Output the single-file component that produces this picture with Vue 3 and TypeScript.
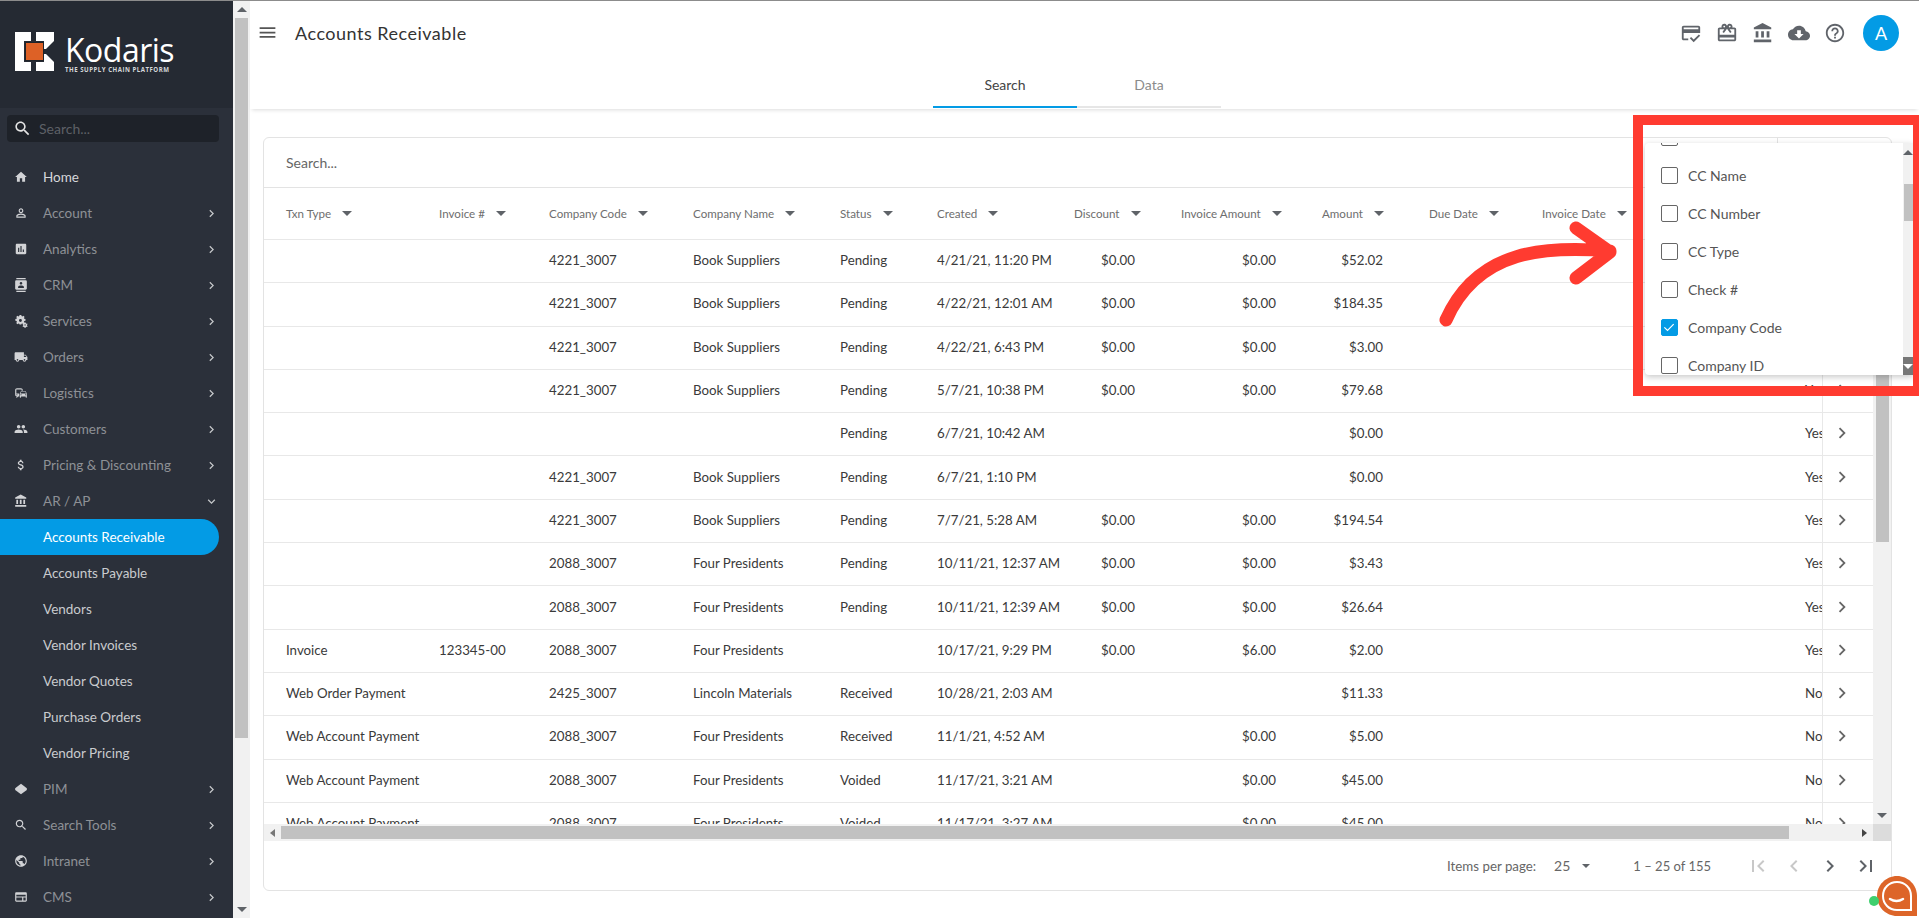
<script setup lang="ts">
const P: Record<string, string> = {
  search: 'M15.5 14h-.79l-.28-.27C15.41 12.59 16 11.11 16 9.5 16 5.91 13.09 3 9.5 3S3 5.91 3 9.5 5.91 16 9.5 16c1.61 0 3.09-.59 4.23-1.57l.27.28v.79l5 4.99L20.49 19l-4.99-5zm-6 0C7.01 14 5 11.99 5 9.5S7.01 5 9.5 5 14 7.01 14 9.5 11.99 14 9.5 14z',
  home: 'M10 20v-6h4v6h5v-8h3L12 3 2 12h3v8z',
  account: 'M12 5.9c1.16 0 2.1.94 2.1 2.1s-.94 2.1-2.1 2.1S9.9 9.16 9.9 8s.94-2.1 2.1-2.1m0 9c2.97 0 6.1 1.46 6.1 2.1v1.1H5.9V17c0-.64 3.13-2.1 6.1-2.1M12 4C9.79 4 8 5.79 8 8s1.79 4 4 4 4-1.79 4-4-1.79-4-4-4zm0 9c-2.67 0-8 1.34-8 4v3h16v-3c0-2.66-5.33-4-8-4z',
  analytics: 'M19 3H5c-1.1 0-2 .9-2 2v14c0 1.1.9 2 2 2h14c1.1 0 2-.9 2-2V5c0-1.1-.9-2-2-2zM9 17H7v-7h2v7zm4 0h-2V7h2v10zm4 0h-2v-4h2v4z',
  crm: 'M20 0H4v2h16V0zM4 24h16v-2H4v2zM20 4H4c-1.1 0-2 .9-2 2v12c0 1.1.9 2 2 2h16c1.1 0 2-.9 2-2V6c0-1.1-.9-2-2-2zm-8 2.75c1.24 0 2.25 1.01 2.25 2.25s-1.01 2.25-2.25 2.25S9.75 10.24 9.75 9 10.76 6.75 12 6.75zM17 17H7v-1.5c0-1.67 3.33-2.5 5-2.5s5 .83 5 2.5V17z',
  services: 'M9.5 1.5h3l.4 2.1 1.4.6 1.8-1.2 2.1 2.1-1.2 1.8.6 1.4 2.1.4v3l-2.1.4-.6 1.4 1.2 1.8-2.1 2.1-1.8-1.2-1.4.6-.4 1.1h-3l-.4-1.1-1.4-.6-1.8 1.2-2.1-2.1 1.2-1.8-.6-1.4-2.1-.4v-3l2.1-.4.6-1.4-1.2-1.8 2.1-2.1 1.8 1.2 1.4-.6zM11 8.5a2.5 2.5 0 1 0 0 5 2.5 2.5 0 0 0 0-5zM18 14.5h2l.3 1.3 1.2.7 1.2-.4.5 1.7-1 .8v1.2l1 .8-.5 1.7-1.2-.4-1.2.7-.3 .9h-2l-.3-.9-1.2-.7-1.2.4-.5-1.7 1-.8v-1.2l-1-.8.5-1.7 1.2.4 1.2-.7zM19 17.5a1.2 1.2 0 1 0 0 2.4 1.2 1.2 0 0 0 0-2.4z',
  orders: 'M20 8h-3V4H3c-1.1 0-2 .9-2 2v11h2c0 1.66 1.34 3 3 3s3-1.34 3-3h6c0 1.66 1.34 3 3 3s3-1.34 3-3h2v-5l-3-4zM6 18.5c-.83 0-1.5-.67-1.5-1.5s.67-1.5 1.5-1.5 1.5.67 1.5 1.5-.67 1.5-1.5 1.5zm13.5-9l1.96 2.5H17V9.5h2.5zm-1.5 9c-.83 0-1.5-.67-1.5-1.5s.67-1.5 1.5-1.5 1.5.67 1.5 1.5-.67 1.5-1.5 1.5z',
  logistics: 'M12 4H5C3.34 4 2 5.34 2 7v8c0 1.66 1.34 3 3 3l-1 1v1h1l2-2.03L9 18v-5H4V5.98L13 6v2h2V7c0-1.66-1.34-3-3-3zM5 14c.55 0 1 .45 1 1s-.45 1-1 1-1-.45-1-1 .45-1 1-1zm15.57-4.34c-.14-.4-.52-.66-.97-.66h-7.19c-.46 0-.83.26-.98.66L10 13.77l.01 5.51c0 .38.31.72.69.72h.62c.38 0 .68-.38.68-.76V18h8v1.24c0 .38.31.76.69.76h.61c.38 0 .69-.34.69-.72l.01-1.37v-4.14l-1.43-4.07zm-8.16.34h7.19l1.03 3h-9.25l1.03-3zM12 16c-.55 0-1-.45-1-1s.45-1 1-1 1 .45 1 1-.45 1-1 1zm8 0c-.55 0-1-.45-1-1s.45-1 1-1 1 .45 1 1-.45 1-1 1z',
  customers: 'M16 11c1.66 0 2.99-1.34 2.99-3S17.66 5 16 5c-1.66 0-3 1.34-3 3s1.34 3 3 3zm-8 0c1.66 0 2.99-1.34 2.99-3S9.66 5 8 5C6.34 5 5 6.34 5 8s1.34 3 3 3zm0 2c-2.33 0-7 1.17-7 3.5V19h14v-2.5c0-2.33-4.67-3.5-7-3.5zm8 0c-.29 0-.62.02-.97.05 1.16.84 1.97 1.97 1.97 3.45V19h6v-2.5c0-2.33-4.67-3.5-7-3.5z',
  pricing: 'M11.8 10.9c-2.27-.59-3-1.2-3-2.15 0-1.09 1.01-1.85 2.7-1.85 1.78 0 2.44.85 2.5 2.1h2.21c-.07-1.72-1.12-3.3-3.21-3.81V3h-3v2.16c-1.94.42-3.5 1.68-3.5 3.61 0 2.31 1.91 3.46 4.7 4.13 2.5.6 3 1.48 3 2.41 0 .69-.49 1.79-2.7 1.79-2.06 0-2.87-.92-2.98-2.1h-2.2c.12 2.19 1.76 3.42 3.68 3.83V21h3v-2.15c1.95-.37 3.5-1.5 3.5-3.55 0-2.84-2.43-3.81-4.7-4.4z',
  bank: 'M4 10v7h3v-7H4zm6 0v7h3v-7h-3zM2 22h19v-3H2v3zm14-12v7h3v-7h-3zm-4.5-9L2 6v2h19V6l-9.5-5z',
  pim: 'M12 3l10 7.5V13.500L12 21 2 13.500V10.500z',
  globe: 'M12 2C6.48 2 2 6.48 2 12s4.48 10 10 10 10-4.48 10-10S17.52 2 12 2zm-1 17.93c-3.95-.49-7-3.85-7-7.93 0-.62.08-1.21.21-1.79L9 15v1c0 1.1.9 2 2 2v1.93zm6.9-2.54c-.26-.81-1-1.39-1.9-1.39h-1v-3c0-.55-.45-1-1-1H8v-2h2c.55 0 1-.45 1-1V7h2c1.1 0 2-.9 2-2v-.41c2.93 1.19 5 4.06 5 7.41 0 2.08-.8 3.97-2.1 5.39z',
  cms: 'M20 4H4C2.9 4 2 4.900 2 6v12c0 1.100.9 2 2 2h16c1.100 0 2-.9 2-2V6c0-1.100-.9-2-2-2zM4 13h10v5H4zm12 0h4v5h-4zM4 8h16v3H4z',
  chev: 'M10 6L8.59 7.41 13.17 12l-4.58 4.59L10 18l6-6z',
  down: 'M16.59 8.59L12 13.17 7.41 8.59 6 10l6 6 6-6z',
  menu: 'M3 18h18v-2H3v2zm0-5h18v-2H3v2zm0-7v2h18V6H3z',
  card: 'M20 4H4C2.89 4 2.010 4.890 2.010 6L2 18c0 1.110.89 2 2 2h5v-2H4v-6h18V6c0-1.110-.89-2-2-2zm0 4H4V6h16v2zM14.930 19.170l-2.830-2.830-1.410 1.410L14.930 22 22 14.930l-1.410-1.410z',
  gift: 'M20 6h-2.180c.11-.31.18-.65.18-1 0-1.660-1.340-3-3-3-1.050 0-1.960.54-2.500 1.350l-.5.67-.5-.68C10.960 2.540 10.050 2 9 2 7.340 2 6 3.340 6 5c0 .35.07.69.18 1H4c-1.110 0-1.990.89-1.990 2L2 19c0 1.110.89 2 2 2h16c1.110 0 2-.89 2-2V8c0-1.110-.89-2-2-2zm-5-2c.55 0 1 .45 1 1s-.45 1-1 1-1-.45-1-1 .45-1 1-1zM9 4c.55 0 1 .45 1 1s-.45 1-1 1-1-.45-1-1 .45-1 1-1zm11 15H4v-2h16v2zm0-5H4V8h5.080L7 10.830 8.620 12 12 7.400l3.380 4.600L17 10.830 14.920 8H20v6z',
  cloud: 'M19.350 10.040C18.670 6.590 15.640 4 12 4 9.110 4 6.600 5.640 5.350 8.040 2.340 8.360 0 10.910 0 14c0 3.310 2.690 6 6 6h13c2.760 0 5-2.240 5-5 0-2.640-2.050-4.780-4.650-4.960zM17 13l-5 5-5-5h3V9h4v4h3z',
  help: 'M11 18h2v-2h-2v2zm1-16C6.480 2 2 6.480 2 12s4.480 10 10 10 10-4.480 10-10S17.520 2 12 2zm0 18c-4.410 0-8-3.590-8-8s3.590-8 8-8 8 3.590 8 8-3.590 8-8 8zm0-14c-2.210 0-4 1.790-4 4h2c0-1.100.9-2 2-2s2 .9 2 2c0 2-3 1.750-3 5h2c0-2.250 3-2.500 3-5 0-2.210-1.790-4-4-4z',
  first: 'M18.410 16.590L13.820 12l4.590-4.590L17 6l-6 6 6 6zM6 6h2v12H6z',
  prev: 'M15.410 7.410L14 6l-6 6 6 6 1.410-1.410L10.830 12z',
  last: 'M5.590 7.410L10.180 12l-4.590 4.590L7 18l6-6-6-6zM16 6h2v12h-2z',
}

interface NavItem { label: string; icon?: string; kind: 'closed' | 'home' | 'open' | 'sub' | 'active' }
const nav: NavItem[] = [
  { label: 'Home', icon: 'home', kind: 'home' },
  { label: 'Account', icon: 'account', kind: 'closed' },
  { label: 'Analytics', icon: 'analytics', kind: 'closed' },
  { label: 'CRM', icon: 'crm', kind: 'closed' },
  { label: 'Services', icon: 'services', kind: 'closed' },
  { label: 'Orders', icon: 'orders', kind: 'closed' },
  { label: 'Logistics', icon: 'logistics', kind: 'closed' },
  { label: 'Customers', icon: 'customers', kind: 'closed' },
  { label: 'Pricing & Discounting', icon: 'pricing', kind: 'closed' },
  { label: 'AR / AP', icon: 'bank', kind: 'open' },
  { label: 'Accounts Receivable', kind: 'active' },
  { label: 'Accounts Payable', kind: 'sub' },
  { label: 'Vendors', kind: 'sub' },
  { label: 'Vendor Invoices', kind: 'sub' },
  { label: 'Vendor Quotes', kind: 'sub' },
  { label: 'Purchase Orders', kind: 'sub' },
  { label: 'Vendor Pricing', kind: 'sub' },
  { label: 'PIM', icon: 'pim', kind: 'closed' },
  { label: 'Search Tools', icon: 'search', kind: 'closed' },
  { label: 'Intranet', icon: 'globe', kind: 'closed' },
  { label: 'CMS', icon: 'cms', kind: 'closed' },
]

const topIcons = ['card', 'gift', 'bank', 'cloud', 'help']

const headers = ['Txn Type', 'Invoice #', 'Company Code', 'Company Name', 'Status', 'Created', 'Discount', 'Invoice Amount', 'Amount', 'Due Date', 'Invoice Date']

type Row = [string, string, string, string, string, string, string, string, string, string]
const B = 'Book Suppliers'
const F = 'Four Presidents'
const W = 'Web Account Payment'
const rows: Row[] = [
  ['', '', '4221_3007', B, 'Pending', '4/21/21, 11:20 PM', '$0.00', '$0.00', '$52.02', 'Yes'],
  ['', '', '4221_3007', B, 'Pending', '4/22/21, 12:01 AM', '$0.00', '$0.00', '$184.35', 'Yes'],
  ['', '', '4221_3007', B, 'Pending', '4/22/21, 6:43 PM', '$0.00', '$0.00', '$3.00', 'Yes'],
  ['', '', '4221_3007', B, 'Pending', '5/7/21, 10:38 PM', '$0.00', '$0.00', '$79.68', 'Yes'],
  ['', '', '', '', 'Pending', '6/7/21, 10:42 AM', '', '', '$0.00', 'Yes'],
  ['', '', '4221_3007', B, 'Pending', '6/7/21, 1:10 PM', '', '', '$0.00', 'Yes'],
  ['', '', '4221_3007', B, 'Pending', '7/7/21, 5:28 AM', '$0.00', '$0.00', '$194.54', 'Yes'],
  ['', '', '2088_3007', F, 'Pending', '10/11/21, 12:37 AM', '$0.00', '$0.00', '$3.43', 'Yes'],
  ['', '', '2088_3007', F, 'Pending', '10/11/21, 12:39 AM', '$0.00', '$0.00', '$26.64', 'Yes'],
  ['Invoice', '123345-00', '2088_3007', F, '', '10/17/21, 9:29 PM', '$0.00', '$6.00', '$2.00', 'Yes'],
  ['Web Order Payment', '', '2425_3007', 'Lincoln Materials', 'Received', '10/28/21, 2:03 AM', '', '', '$11.33', 'No'],
  [W, '', '2088_3007', F, 'Received', '11/1/21, 4:52 AM', '', '$0.00', '$5.00', 'No'],
  [W, '', '2088_3007', F, 'Voided', '11/17/21, 3:21 AM', '', '$0.00', '$45.00', 'No'],
  [W, '', '2088_3007', F, 'Voided', '11/17/21, 3:27 AM', '', '$0.00', '$45.00', 'No'],
]

const options = [
  { label: 'CC Address', checked: false },
  { label: 'CC Name', checked: false },
  { label: 'CC Number', checked: false },
  { label: 'CC Type', checked: false },
  { label: 'Check #', checked: false },
  { label: 'Company Code', checked: true },
  { label: 'Company ID', checked: false },
]

const pager = [
  { icon: 'first', off: true },
  { icon: 'prev', off: true },
  { icon: 'chev', off: false },
  { icon: 'last', off: false },
]
</script>

<template>
  <div class="app">
    <aside class="side">
      <div class="brand">
        <svg class="mark" viewBox="0 0 39 39">
          <path fill="#fff" d="M0 0H16V9H9V30H16V39H0zM21 0H39V9L31 17H29V9H21zM29 22H31L39 30V39H21V30H29z" />
          <rect x="10" y="10" width="19" height="19" fill="#1f2329" />
          <rect x="11" y="11" width="17" height="17" fill="#dd6126" />
        </svg>
        <div class="word">
          <span class="name">Kodaris</span>
          <span class="tag">THE SUPPLY CHAIN PLATFORM</span>
        </div>
      </div>
      <div class="side-search">
        <svg class="ss-icon" viewBox="0 0 24 24"><path :d="P.search" /></svg>
        <span>Search...</span>
      </div>
      <nav class="nav">
        <div v-for="n in nav" :key="n.label" class="item" :class="n.kind">
          <span class="ico"><svg v-if="n.icon" viewBox="0 0 24 24"><path :d="P[n.icon]" /></svg></span>
          <span class="lbl">{{ n.label }}</span>
          <svg v-if="n.kind === 'closed'" class="chev" viewBox="0 0 24 24"><path :d="P.chev" /></svg>
          <svg v-if="n.kind === 'open'" class="chev" viewBox="0 0 24 24"><path :d="P.down" /></svg>
        </div>
      </nav>
    </aside>
    <div class="page-bar">
      <div class="arrow-box"><i class="tri up"></i></div>
      <div class="page-thumb"></div>
      <div class="grow"></div>
      <div class="arrow-box"><i class="tri dn"></i></div>
    </div>

    <main class="main">
      <header class="top">
        <svg class="burger" viewBox="0 0 24 24"><path :d="P.menu" /></svg>
        <h1>Accounts Receivable</h1>
        <div class="top-icons">
          <svg v-for="i in topIcons" :key="i" viewBox="0 0 24 24"><path :d="P[i]" /></svg>
        </div>
        <div class="avatar">A</div>
      </header>
      <div class="tabs">
        <div class="tab on">Search</div>
        <div class="tab">Data</div>
      </div>

      <section class="card">
        <div class="card-search">
          <span class="cs-text">Search...</span>
          <span class="cs-box"></span>
        </div>
        <div class="body">
          <div class="table">
            <div class="row head">
              <div v-for="(h, i) in headers" :key="h" class="cell" :class="{ first: i === 0 }">
                {{ h }}<i class="tri dn sort"></i>
              </div>
            </div>
            <div v-for="(r, ri) in rows" :key="ri" class="row">
              <div class="cell first">{{ r[0] }}</div>
              <div class="cell">{{ r[1] }}</div>
              <div class="cell">{{ r[2] }}</div>
              <div class="cell">{{ r[3] }}</div>
              <div class="cell">{{ r[4] }}</div>
              <div class="cell">{{ r[5] }}</div>
              <div class="cell num">{{ r[6] }}</div>
              <div class="cell num">{{ r[7] }}</div>
              <div class="cell num">{{ r[8] }}</div>
              <div class="cell"></div>
              <div class="cell"></div>
              <div class="cell"></div>
              <div class="cell clip">{{ r[9] }}</div>
              <div class="cell go"><svg viewBox="0 0 24 24"><path :d="P.chev" /></svg></div>
            </div>
          </div>
          <div class="vbar">
            <div class="v-thumb"></div>
            <div class="grow"></div>
            <div class="arrow-box"><i class="tri dn"></i></div>
          </div>
        </div>
        <div class="hbar">
          <div class="h-arrow"><i class="tri lf"></i></div>
          <div class="h-thumb"></div>
          <div class="grow"></div>
          <div class="h-arrow"><i class="tri rt"></i></div>
          <div class="corner"></div>
        </div>
        <footer class="foot">
          <span class="ipp">Items per page:</span>
          <span class="sel">25<i class="tri dn"></i></span>
          <span class="range">1 – 25 of 155</span>
          <button v-for="b in pager" :key="b.icon" class="pg" :class="{ off: b.off }">
            <svg viewBox="0 0 24 24"><path :d="P[b.icon]" /></svg>
          </button>
        </footer>
      </section>
    </main>

    <div class="panel">
      <div class="opts">
        <div v-for="o in options" :key="o.label" class="opt">
          <span class="box" :class="{ on: o.checked }">
            <svg v-if="o.checked" viewBox="0 0 24 24"><path d="M4 12.500l5.500 5.500L20 7" /></svg>
          </span>
          <span>{{ o.label }}</span>
        </div>
      </div>
      <div class="p-bar">
        <div class="p-arrow"><i class="tri up"></i></div>
        <div class="p-thumb"></div>
        <div class="grow"></div>
        <div class="p-arrow dark"><i class="tri dn white"></i></div>
      </div>
    </div>

    <div class="redbox"></div>
    <svg class="callout" viewBox="0 0 190 110">
      <path d="M8 100 C40 28 110 26 172 31 M138 8 L172 32 L138 58" />
    </svg>

    <div class="chat">
      <svg viewBox="0 0 42 42">
        <path fill="#dd6529" d="M21 1C32 1 41 10 41 21V41H21C10 41 1 32 1 21S10 1 21 1z" />
        <path fill="none" stroke="#fff" stroke-width="2" d="M21 7C29 7 35 13 35 21V35H21C13 35 7 29 7 21S13 7 21 7z" />
        <path fill="none" stroke="#fff" stroke-width="2.500" stroke-linecap="round" d="M14 24c4 2.500 9 2.500 13 0" />
      </svg>
      <i class="dot"></i>
    </div>
  </div>
</template>

<style>
html, body { margin: 0; padding: 0; overflow: hidden; background: #fff; }
</style>

<style scoped>
.app {
  position: relative;
  display: flex;
  width: 1919px;
  height: 918px;
  box-sizing: border-box;
  border-top: 1px solid #8c8c8c;
  overflow: hidden;
  font-family: Lato, "Open Sans", sans-serif;
  color: #333;
}
.grow { flex: 1; }
.tri { display: block; width: 0; height: 0; border-style: solid; border-color: transparent; }
.tri.dn { border-width: 5px 5px 0; border-top-color: #5f6368; }
.tri.up { border-width: 0 5px 5px; border-bottom-color: #5f6368; }
.tri.lf { border-width: 4px 5px 4px 0; border-right-color: #777; }
.tri.rt { border-width: 4px 0 4px 5px; border-left-color: #444; }
.tri.white { border-top-color: #fff; }

.side {
  width: 233px;
  flex: none;
  background: #2b303a;
  display: flex;
  flex-direction: column;
  overflow: hidden;
}
.brand {
  height: 107px;
  flex: none;
  background: #252a33;
  display: flex;
  align-items: flex-start;
  gap: 11px;
  padding: 31px 0 0 15px;
  box-sizing: border-box;
}
.mark { width: 39px; height: 39px; flex: none; }
.word { display: flex; flex-direction: column; margin-top: 5px; }
.name { font: 500 32px/26px "Open Sans", sans-serif; color: #fff; letter-spacing: -.5px; }
.tag { font: 700 6.100px/8px "Open Sans", sans-serif; color: #d5d7da; letter-spacing: .5px; white-space: nowrap; margin-top: 3px; }
.side-search {
  margin: 7px 14px 0 7px;
  height: 27px;
  flex: none;
  background: #1e2229;
  border-radius: 4px;
  display: flex;
  align-items: center;
  font-size: 14px;
  color: #5d6066;
}
.ss-icon { width: 19px; height: 19px; fill: #e4e4e4; margin: 0 7px 0 6px; flex: none; }
.nav { margin-top: 17px; display: flex; flex-direction: column; }
.item {
  height: 36px;
  flex: none;
  display: flex;
  align-items: center;
  font-size: 13.500px;
  color: #8e9196;
  margin-right: 14px;
  white-space: nowrap;
}
.ico { width: 43px; flex: none; display: flex; justify-content: center; padding-right: 1px; box-sizing: border-box; }
.ico svg { width: 14px; height: 14px; fill: #d2d3d6; margin-left: -1px; }
.lbl { flex: 1; }
.chev { width: 15px; height: 15px; fill: #c4c6c9; flex: none; }
.item.home { color: #d6d7da; }
.item.sub { color: #c9cbce; }
.item.active { background: #039be5; color: #fff; border-radius: 0 18px 18px 0; }

.page-bar {
  width: 17px;
  flex: none;
  background: #f1f1f1;
  display: flex;
  flex-direction: column;
  box-sizing: border-box;
}
.arrow-box { height: 17px; flex: none; display: flex; align-items: center; justify-content: center; }
.page-thumb { height: 720px; margin: 0 2px; background: #c1c1c1; flex: none; }

.main { flex: 1; min-width: 0; display: flex; flex-direction: column; }
.top { height: 64px; flex: none; display: flex; align-items: center; padding: 0 20px 1px 7px; box-sizing: border-box; }
.burger { width: 21px; height: 21px; fill: #555; flex: none; }
.top h1 { margin: 0 0 0 17px; font-size: 18px; font-weight: 400; color: #333; flex: 1; letter-spacing: .5px; }
.top-icons { display: flex; gap: 14px; margin-right: 17px; }
.top-icons svg { width: 22px; height: 22px; fill: #60646a; display: block; }
.avatar {
  width: 36px;
  height: 36px;
  border-radius: 50%;
  background: #039be5;
  color: #fff;
  display: flex;
  align-items: center;
  justify-content: center;
  font-size: 18px;
}
.tabs {
  height: 44px;
  flex: none;
  display: flex;
  padding-left: 683px;
  box-shadow: 0 3px 4px -2px rgba(0, 0, 0, .14);
}
.tab {
  width: 144px;
  height: 43px;
  box-sizing: border-box;
  border-bottom: 2px solid #e6e6e6;
  display: flex;
  align-items: center;
  justify-content: center;
  font-size: 14px;
  color: #8b8b8b;
  padding-bottom: 3px;
}
.tab.on { color: #444; border-bottom-color: #039be5; }

.card {
  margin: 28px 0 0 13px;
  width: 1629px;
  height: 754px;
  box-sizing: border-box;
  border: 1px solid #e3e3e3;
  border-radius: 6px;
  display: flex;
  flex-direction: column;
  overflow: hidden;
  flex: none;
}
.card-search {
  height: 50px;
  flex: none;
  display: flex;
  align-items: center;
  justify-content: space-between;
  border-bottom: 1px solid #e3e3e3;
  box-sizing: border-box;
  font-size: 14px;
  color: #666;
}
.cs-text { padding-left: 22px; }
.cs-box { width: 113px; height: 100%; border-left: 1px solid #e3e3e3; }
.body { flex: 1; min-height: 0; display: flex; overflow: hidden; }
.table { width: 1609px; flex: none; overflow: hidden; }
.row {
  display: grid;
  grid-template-columns: 166px 110px 144px 147px 97px 137px 107px 141px 107px 113px 113px 150px 26px 51px;
  height: 43.300px;
  box-sizing: border-box;
  border-bottom: 1px solid #e8e8e8;
  font-size: 13.300px;
  color: #3a3a3a;
}
.row:not(.head) .cell { padding-bottom: 2px; }
.row.head { height: 52px; font-size: 11.600px; color: #6e6e6e; }
.cell {
  display: flex;
  align-items: center;
  padding-left: 9px;
  white-space: nowrap;
  overflow: hidden;
  min-width: 0;
}
.cell.first { padding-left: 22px; }
.cell.num { justify-content: flex-end; padding-right: 37px; padding-left: 0; }
.cell.clip { overflow: hidden; padding-left: 9px; }
.cell.go { padding-left: 8px; border-left: 1px solid #e8e8e8; }
.cell.go svg { width: 22px; height: 22px; fill: #666; }
.sort { margin-left: 11px; flex: none; }
.vbar { width: 18px; flex: none; background: #f1f1f1; display: flex; flex-direction: column; }
.v-thumb { height: 352px; margin: 2px 2px 0 3px; background: #c1c1c1; flex: none; }
.hbar { height: 17px; flex: none; background: #f1f1f1; display: flex; align-items: stretch; }
.h-arrow { width: 17px; flex: none; display: flex; align-items: center; justify-content: center; }
.h-thumb { width: 1508px; margin: 2px 0; background: #c1c1c1; flex: none; }
.corner { width: 18px; background: #dcdcdc; flex: none; }
.foot {
  height: 49px;
  flex: none;
  display: flex;
  align-items: center;
  justify-content: flex-end;
  padding-right: 7px;
  font-size: 13.300px;
  color: #666;
}
.sel { display: flex; align-items: center; gap: 12px; margin-left: 18px; font-size: 14px; }
.sel .tri { border-width: 4px 4px 0; }
.range { margin-left: 43px; margin-right: 29px; font-size: 13px; }
.pg {
  width: 36px;
  height: 36px;
  padding: 0;
  background: none;
  border: 0;
  display: flex;
  align-items: center;
  justify-content: center;
}
.pg svg { width: 24px; height: 24px; fill: #5f6368; }
.pg.off svg { fill: #c8c8c8; }

.panel {
  position: absolute;
  left: 1645px;
  top: 142px;
  width: 268px;
  height: 232px;
  background: #fff;
  border-radius: 4px 0 0 4px;
  box-shadow: 0 2px 6px rgba(0, 0, 0, .22);
  overflow: hidden;
  display: flex;
  z-index: 2;
}
.opts { flex: 1; margin-top: -25px; }
.opt {
  height: 38px;
  display: flex;
  align-items: center;
  gap: 10px;
  padding-left: 16px;
  font-size: 14px;
  color: #555;
}
.box {
  width: 17px;
  height: 17px;
  box-sizing: border-box;
  border: 1.500px solid #666;
  border-radius: 2px;
  flex: none;
}
.box.on { background: #039be5; border-color: #039be5; }
.box svg { display: block; width: 14px; height: 14px; fill: none; stroke: #fff; stroke-width: 2; }
.p-bar { width: 10px; background: #f1f1f1; display: flex; flex-direction: column; flex: none; }
.p-arrow { height: 18px; flex: none; display: flex; align-items: center; justify-content: center; }
.p-arrow.dark { background: #777; }
.p-thumb { height: 37px; margin: 23px 0 0 1px; background: #c1c1c1; flex: none; }

.redbox {
  position: absolute;
  left: 1633px;
  top: 114px;
  width: 286px;
  height: 281px;
  box-sizing: border-box;
  border: 10px solid #ff3b30;
  border-right-width: 6px;
  z-index: 3;
}
.callout {
  position: absolute;
  left: 1438px;
  top: 219px;
  width: 190px;
  height: 110px;
  fill: none;
  stroke: #ff3b30;
  stroke-width: 13;
  stroke-linecap: round;
  stroke-linejoin: round;
  z-index: 3;
}
.chat { position: absolute; left: 1876px; top: 874px; width: 42px; height: 42px; z-index: 4; }
.chat svg { width: 42px; height: 42px; display: block; }
.dot {
  position: absolute;
  left: -7px;
  top: 21px;
  width: 10px;
  height: 10px;
  border-radius: 50%;
  background: #3ecf6e;
}
</style>
